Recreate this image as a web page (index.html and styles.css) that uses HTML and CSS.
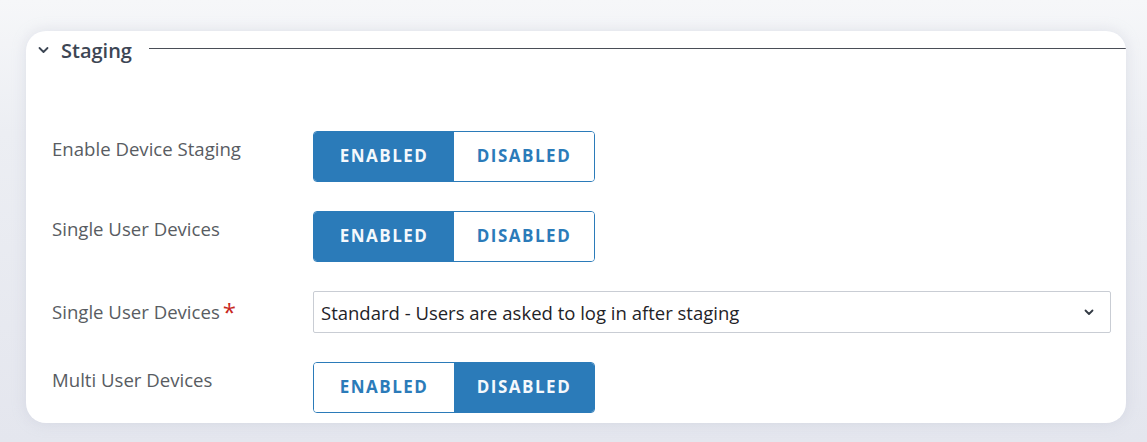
FILE: index.html
```html
<!DOCTYPE html>
<html lang="en">
<head>
<meta charset="utf-8">
<title>Staging</title>
<link rel="stylesheet" href="styles.css">
</head>
<body>
<div class="page">
  <section class="card">
    <div class="section-head">
      <svg class="chev" width="11" height="8" viewBox="0 0 11 8"><path d="M1.5 2 L5.5 6 L9.5 2" fill="none" stroke="#3d4654" stroke-width="1.8" stroke-linecap="round" stroke-linejoin="round"/></svg>
      <span class="section-title">Staging</span>
      <span class="section-rule"></span>
    </div>
    <div class="form">
      <div class="row">
        <div class="label">Enable Device Staging</div>
        <div class="toggle">
          <span class="opt active">ENABLED</span>
          <span class="opt">DISABLED</span>
        </div>
      </div>
      <div class="row">
        <div class="label">Single User Devices</div>
        <div class="toggle">
          <span class="opt active">ENABLED</span>
          <span class="opt">DISABLED</span>
        </div>
      </div>
      <div class="row row-select">
        <div class="label">Single User Devices<span class="req">*</span></div>
        <div class="select">
          <span class="select-text">Standard - Users are asked to log in after staging</span>
          <svg class="select-chev" width="10" height="7" viewBox="0 0 10 7"><path d="M1.5 1.5 L5 5 L8.5 1.5" fill="none" stroke="#333a44" stroke-width="1.8" stroke-linecap="round" stroke-linejoin="round"/></svg>
        </div>
      </div>
      <div class="row">
        <div class="label">Multi User Devices</div>
        <div class="toggle">
          <span class="opt">ENABLED</span>
          <span class="opt active">DISABLED</span>
        </div>
      </div>
    </div>
  </section>
</div>
</body>
</html>
```

FILE: styles.css
```css
* { box-sizing: border-box; }
html, body {
  margin: 0;
  height: 100%;
}
body {
  font-family: "Open Sans", "Noto Sans", sans-serif;
  background: linear-gradient(180deg, #f6f7f9 0%, #eceef3 30%, #e4e6ee 100%);
}
.page {
  padding: 31px 21px 0 26px;
}
.card {
  background: #ffffff;
  border-radius: 20px;
  height: 392px;
  box-shadow: 0 0 14px rgba(180, 186, 204, 0.35);
  overflow: hidden;
}
.section-head {
  display: flex;
  align-items: center;
  height: 38px;
  padding-left: 12px;
}
.chev {
  display: block;
}
.section-title {
  font-size: 20px;
  font-weight: 600;
  color: #3d4654;
  margin-left: 12px;
  line-height: 24px;
  margin-top: 2px;
}
.section-rule {
  flex: 1;
  height: 1px;
  background: #4a4e57;
  margin-left: 17px;
  margin-top: -3px;
}
.form {
  padding: 62px 14px 0 26px;
  display: flex;
  flex-direction: column;
  gap: 29px;
}
.row {
  display: grid;
  grid-template-columns: 261px 1fr;
  align-items: start;
}
.label {
  font-size: 18.6px;
  line-height: 24px;
  color: #585c62;
  margin-top: 6px;
}
.row-select .label {
  margin-top: 9px;
}
.req {
  color: #c8281e;
  font-size: 24px;
  margin-left: 3px;
  vertical-align: -2px;
  line-height: 10px;
}
.toggle {
  display: flex;
  width: 282px;
  height: 51px;
  border: 1px solid #2b7bb9;
  border-radius: 4px;
  overflow: hidden;
}
.opt {
  flex: 0 0 140px;
  display: flex;
  align-items: center;
  justify-content: center;
  padding-bottom: 2px;
  font-size: 17px;
  font-weight: 700;
  letter-spacing: 1.5px;
  color: #2b7bb9;
  background: #ffffff;
}
.opt + .opt { flex: 1; }
.opt.active {
  background: #2b7bb9;
  color: #f4f8fc;
}
.select {
  width: 798px;
  height: 42px;
  border: 1px solid #c9cdd4;
  border-radius: 2px;
  display: flex;
  align-items: center;
  padding: 0 16px 0 7px;
}
.select-text {
  flex: 1;
  font-size: 18.5px;
  color: #1f2328;
}
.select-chev {
  display: block;
}
```
